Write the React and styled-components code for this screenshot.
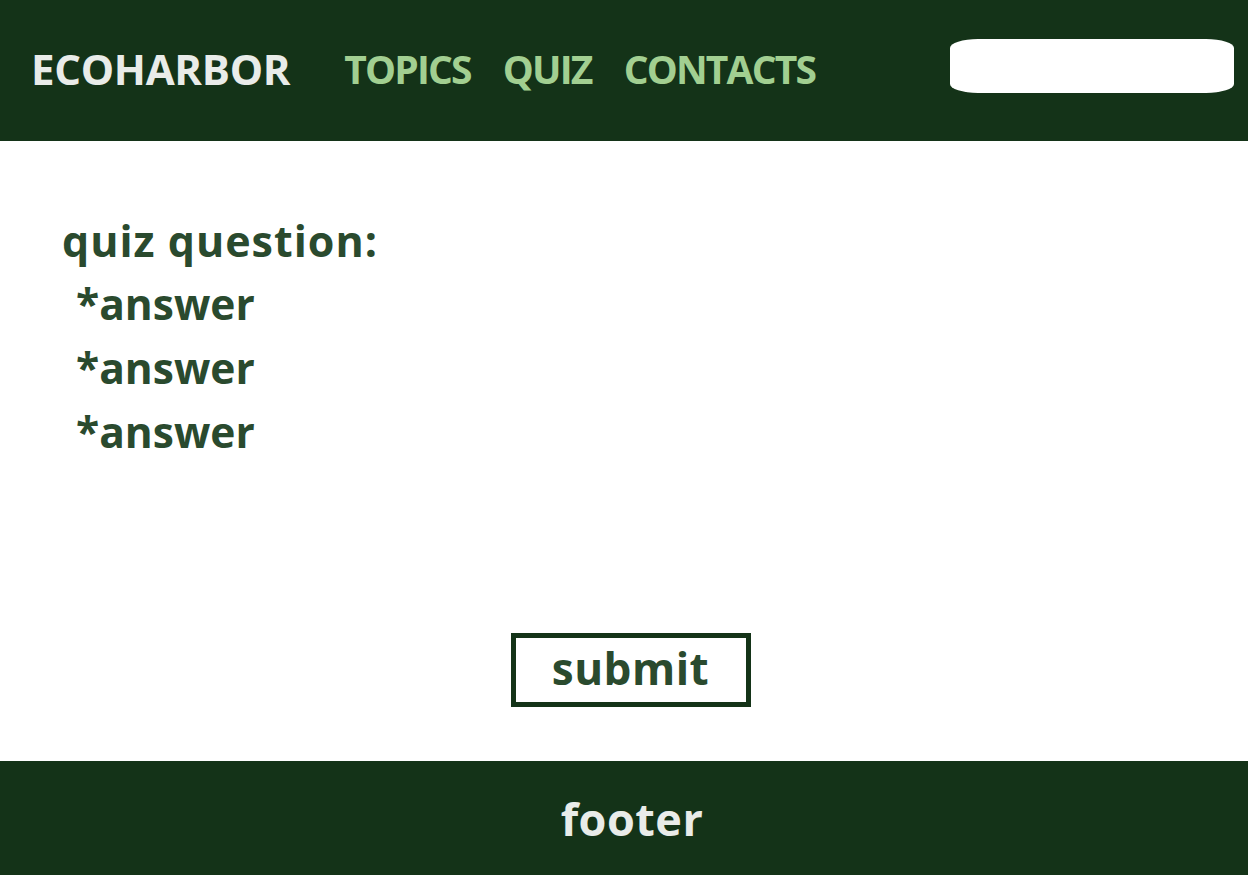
import styled, { createGlobalStyle } from 'styled-components';

const GlobalStyle = createGlobalStyle`
  html, body {
    margin: 0;
    padding: 0;
    background: #ffffff;
  }
  * {
    box-sizing: border-box;
  }
`;

function App() {
  const answers = ['*answer', '*answer', '*answer'];

  return (
    <>
      <GlobalStyle />
      <Page>
        <Header>
          <Logo>ECOHARBOR</Logo>
          <Nav>
            <NavLink>TOPICS</NavLink>
            <NavLink>QUIZ</NavLink>
            <NavLink>CONTACTS</NavLink>
          </Nav>
          <Search type="text" aria-label="search" />
        </Header>
        <Main>
          <Quiz>
            <Question>quiz question:</Question>
            {answers.map((a, i) => (
              <Answer key={i}>{a}</Answer>
            ))}
          </Quiz>
          <SubmitRow>
            <SubmitButton>submit</SubmitButton>
          </SubmitRow>
        </Main>
        <Footer>footer</Footer>
      </Page>
    </>
  );
}

export default App;

const Page = styled.div`
  min-height: 100vh;
  display: flex;
  flex-direction: column;
  font-family: 'Open Sans', 'Noto Sans', sans-serif;
  font-weight: 700;
`;

const Header = styled.header`
  height: 141px;
  background: #143318;
  display: flex;
  align-items: center;
  padding: 0 14px 4px 31px;
`;

const Logo = styled.div`
  font-size: 42px;
  letter-spacing: -0.3px;
  color: #e9ece9;
  margin-right: 54px;
`;

const Nav = styled.nav`
  display: flex;
  gap: 32px;
  flex: 1;
`;

const NavLink = styled.a`
  font-size: 39px;
  letter-spacing: -1.8px;
  color: #a2cf91;
  cursor: pointer;
`;

const Search = styled.input`
  width: 284px;
  height: 54px;
  border: none;
  background: #ffffff;
  border-radius: 28px / 9px;
  outline: none;
  margin-top: -6px;
`;

const Main = styled.main`
  flex: 1;
  display: flex;
  flex-direction: column;
  padding: 69px 62px 54px;
`;

const Quiz = styled.div`
  flex: 1;
  display: flex;
  flex-direction: column;
  color: #2a4a2e;
`;

const Question = styled.div`
  font-size: 43px;
  letter-spacing: 1px;
  line-height: 62px;
`;

const Answer = styled.div`
  font-size: 42.5px;
  line-height: 64px;
  padding-left: 14px;
`;

const SubmitRow = styled.div`
  display: flex;
  justify-content: center;
  padding-left: 13px;
`;

const SubmitButton = styled.button`
  width: 240px;
  height: 74px;
  border: 5px solid #143318;
  background: #ffffff;
  color: #2a4a2e;
  font-family: 'Open Sans', 'Noto Sans', sans-serif;
  font-weight: 700;
  font-size: 44px;
  letter-spacing: 0.5px;
  padding: 0 0 4px;
  cursor: pointer;
`;

const Footer = styled.footer`
  height: 114px;
  background: #143318;
  color: #e9ece9;
  font-size: 45px;
  letter-spacing: 0.5px;
  display: flex;
  align-items: center;
  justify-content: center;
  padding-left: 16px;
`;
